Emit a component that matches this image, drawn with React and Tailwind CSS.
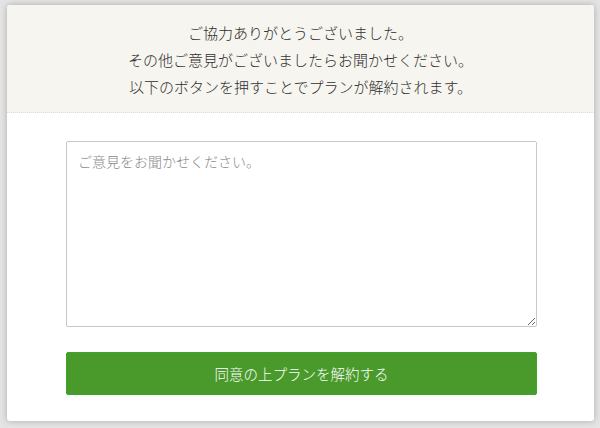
export default function App() {
  return (
    <div className="h-[428px] w-[600px] bg-[#e4e4e4] pl-[7px] pr-[6px] pt-[5px] pb-[7px]" style={{ fontFamily: '"Noto Sans CJK JP", "Noto Sans", sans-serif' }}>
      <div className="h-full overflow-hidden rounded-[3px] bg-white shadow-[0_0_6px_rgba(0,0,0,0.25)]">
        <div className="flex h-[108px] flex-col items-center justify-center border-b border-dotted border-[#dddddd] bg-[#f6f5ef] pt-[2px] text-[15px] leading-[27px] font-light text-[#2f2f2f]">
          <p>ご協力ありがとうございました。</p>
          <p>その他ご意見がございましたらお聞かせください。</p>
          <p>以下のボタンを押すことでプランが解約されます。</p>
        </div>
        <div className="pl-[59px] pr-[57px] pt-[28px]">
          <textarea
            className="block h-[186px] w-full resize-y rounded-[2px] border border-[#c8c8c8] px-[11px] py-[7px] text-[14px] font-light leading-[24px] text-[#333333] placeholder:text-[#888888] focus:outline-none"
            placeholder="ご意見をお聞かせください。"
          />
          <button className="mt-[25px] flex h-[43px] w-full items-center justify-center rounded-[2px] border border-[#3aa826] bg-[#4a9a2b] text-[14.5px] font-light text-white">
            同意の上プランを解約する
          </button>
        </div>
      </div>
    </div>
  );
}
